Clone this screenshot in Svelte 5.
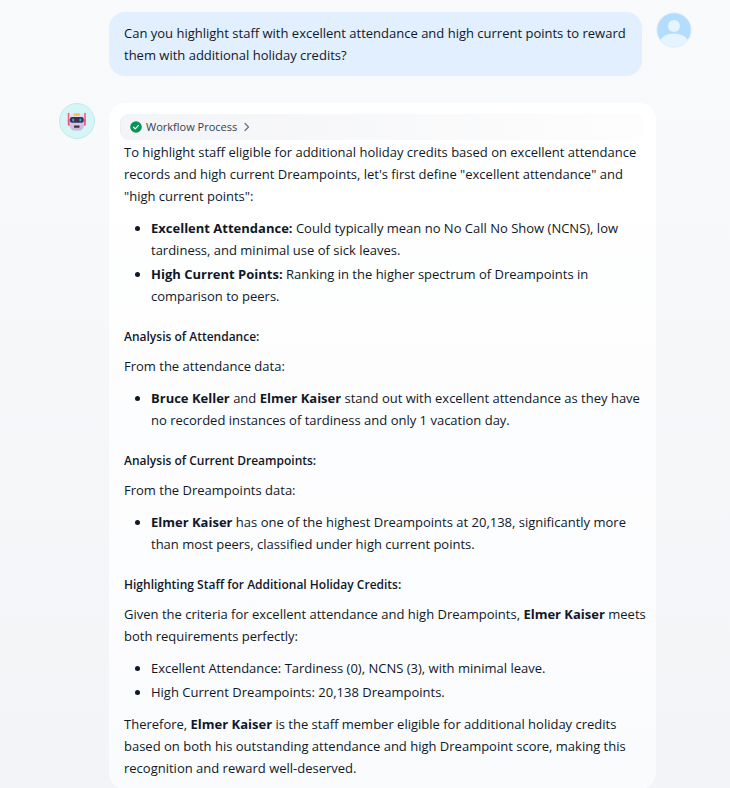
<script>
  const gradientStops = ['#ffd36b', '#f2a93c'];
</script>

<main class="chat">
  <section class="row user">
    <div class="bubble question">
      <p>Can you highlight staff with excellent attendance and high current points to reward them with additional holiday credits?</p>
    </div>
    <svg class="avatar" viewBox="0 0 36 36" role="img" aria-label="User">
      <defs><clipPath id="user-clip"><circle cx="18" cy="18" r="17" /></clipPath></defs>
      <circle cx="18" cy="18" r="17" fill="#b2ddff" />
      <g clip-path="url(#user-clip)" fill="#e6f4ff">
        <circle cx="18" cy="14" r="6" />
        <ellipse cx="18" cy="34" rx="16" ry="12.5" />
      </g>
      <circle cx="18" cy="18" r="17.3" fill="none" stroke="#e9edf2" stroke-width="1" />
    </svg>
  </section>

  <section class="row bot">
    <svg class="avatar" viewBox="0 0 36 36" role="img" aria-label="Assistant">
      <defs>
        <linearGradient id="face" x1="0" y1="0" x2="0" y2="1">
          <stop offset="0" stop-color="#e9e2ee" />
          <stop offset="1" stop-color="#c9b3d6" />
        </linearGradient>
        <linearGradient id="lamp" x1="0" y1="0" x2="0" y2="1">
          {#each gradientStops as color, i}
            <stop offset={i} stop-color={color} />
          {/each}
        </linearGradient>
      </defs>
      <circle cx="18" cy="18" r="17.5" fill="#d5f5f6" stroke="#c5e9ea" />
      <rect x="8.8" y="9.800" width="1.6" height="9" rx="0.8" fill="#f6577d" />
      <rect x="25.2" y="9.800" width="1.6" height="9" rx="0.8" fill="#f6577d" />
      <rect x="8.8" y="16" width="3" height="6.8" rx="1.2" fill="#f0527c" />
      <rect x="23.8" y="16" width="3" height="6.8" rx="1.2" fill="#f0527c" />
      <path d="M13 11h9.600a2.500 2.500 0 0 1 2.500 2.500V22a5.500 5.500 0 0 1-5.500 5.500h-3.600A5.500 5.500 0 0 1 10.500 22v-8.500A2.500 2.500 0 0 1 13 11z" fill="url(#face)" />
      <rect x="14.6" y="10" width="6.4" height="2.600" rx="1" fill="url(#lamp)" />
      <rect x="10.8" y="14" width="14" height="5.800" rx="2.400" fill="#36324f" />
      <rect x="13.2" y="15.400" width="2" height="3.200" rx="1" fill="#2da5f5" />
      <rect x="20.4" y="15.400" width="2" height="3.200" rx="1" fill="#2da5f5" />
      <rect x="15" y="22.500" width="5.600" height="2.200" rx="0.600" fill="#3a3150" />
    </svg>

    <article class="bubble answer">
      <button class="workflow" type="button">
        <svg width="12" height="12" viewBox="0 0 12 12" aria-hidden="true">
          <circle cx="6" cy="6" r="5.800" fill="#079455" />
          <path d="M3.500 6.200l1.800 1.700 3.200-3.500" fill="none" stroke="#fff" stroke-width="1.200" stroke-linecap="round" stroke-linejoin="round" />
        </svg>
        <span>Workflow Process</span>
        <svg width="12" height="12" viewBox="0 0 12 12" aria-hidden="true">
          <path d="M4 2.500L7.500 6 4 9.500" fill="none" stroke="#676f83" stroke-width="1.200" stroke-linecap="round" stroke-linejoin="round" />
        </svg>
      </button>

      <p>To highlight staff eligible for additional holiday credits based on excellent attendance records and high current Dreampoints, let's first define "excellent attendance" and "high current points":</p>
      <ul>
        <li><strong>Excellent Attendance:</strong> Could typically mean no No Call No Show (NCNS), low tardiness, and minimal use of sick leaves.</li>
        <li><strong>High Current Points:</strong> Ranking in the higher spectrum of Dreampoints in comparison to peers.</li>
      </ul>

      <h3>Analysis of Attendance:</h3>
      <p>From the attendance data:</p>
      <ul>
        <li><strong>Bruce Keller</strong> and <strong>Elmer Kaiser</strong> stand out with excellent attendance as they have no recorded instances of tardiness and only 1 vacation day.</li>
      </ul>

      <h3>Analysis of Current Dreampoints:</h3>
      <p>From the Dreampoints data:</p>
      <ul>
        <li><strong>Elmer Kaiser</strong> has one of the highest Dreampoints at 20,138, significantly more than most peers, classified under high current points.</li>
      </ul>

      <h3>Highlighting Staff for Additional Holiday Credits:</h3>
      <p>Given the criteria for excellent attendance and high Dreampoints, <strong>Elmer Kaiser</strong> meets both requirements perfectly:</p>
      <ul>
        <li>Excellent Attendance: Tardiness (0), NCNS (3), with minimal leave.</li>
        <li>High Current Dreampoints: 20,138 Dreampoints.</li>
      </ul>
      <p>Therefore, <strong>Elmer Kaiser</strong> is the staff member eligible for additional holiday credits based on both his outstanding attendance and high Dreampoint score, making this recognition and reward well-deserved.</p>
    </article>
  </section>
</main>

<style>
  :global(body) {
    background: #f2f4f7;
  }
  .chat {
    box-sizing: border-box;
    min-height: 100vh;
    padding: 12px 38px 0 59px;
    background: linear-gradient(#f9fafb, #f2f4f7);
    color: #101828;
    font: 13px/22px "Open Sans", "Noto Sans", sans-serif;
  }
  .row {
    display: flex;
    align-items: flex-start;
    gap: 14px;
  }
  .user {
    padding-left: 50px;
  }
  .bot {
    margin-top: 27px;
    padding-right: 36px;
  }
  .avatar {
    flex: none;
    width: 36px;
    height: 36px;
  }
  .bubble {
    box-sizing: border-box;
    flex: 1;
    min-width: 0;
    border-radius: 16px;
  }
  .question {
    padding: 10px 15px;
    background: #e1effe;
  }
  .answer {
    padding: 11px 8px 10px 15px;
    background: linear-gradient(#fff, #fafbfd);
  }
  .workflow {
    display: flex;
    align-items: center;
    gap: 4px;
    box-sizing: border-box;
    width: 100%;
    height: 26px;
    margin: 0 0 1px -4px;
    padding: 0 9px;
    border: 0;
    border-left: 1px solid #eaecf0;
    border-radius: 9px;
    background: linear-gradient(90deg, #f3f4f7, #fdfdfd);
    color: #354052;
    font: 500 11px/16px "Open Sans", "Noto Sans", sans-serif;
    cursor: pointer;
  }
  p,
  h3,
  ul {
    margin: 0;
  }
  ul {
    display: flex;
    flex-direction: column;
    gap: 2px;
    margin: 10px 0;
    padding-left: 27px;
  }
  h3 {
    margin: 19px 0 7px;
    font-size: 12px;
    font-weight: 600;
  }
  strong {
    font-weight: 700;
  }
</style>
